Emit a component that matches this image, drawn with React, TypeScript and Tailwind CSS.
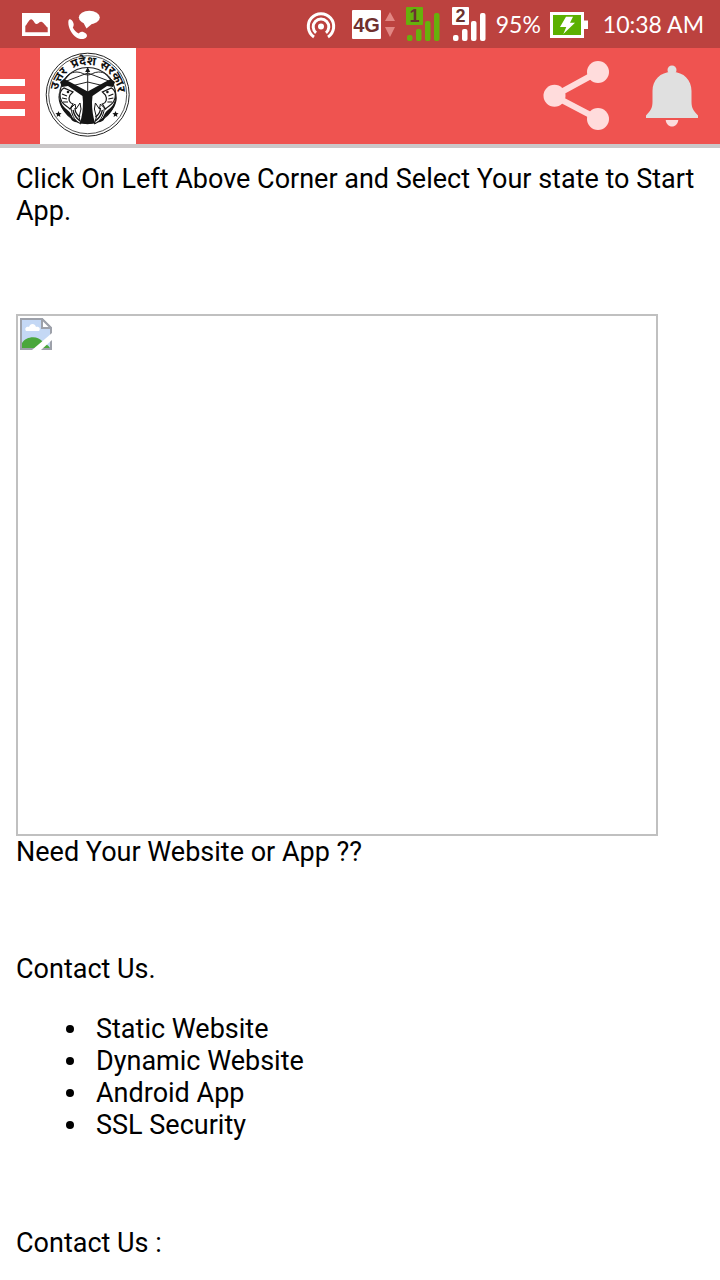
import type { ReactNode } from "react";

const services = ["Static Website", "Dynamic Website", "Android App", "SSL Security"];

function SignalBars({ sim, color }: { sim: string; color: string }) {
  return (
    <svg className="h-9 w-9" viewBox="0 0 36 36" role="img" aria-label={`SIM ${sim}`}>
      <rect x="0" y="1" width="17" height="18" rx="1" fill={color} />
      <text x="8.5" y="16" textAnchor="middle" fontSize="18" fontWeight="700" fill="#6b3330" fontFamily="Liberation Sans, sans-serif">
        {sim}
      </text>
      <g fill={color}>
        <rect x="1" y="29" width="5.5" height="6" rx="2" />
        <rect x="10" y="23" width="5.5" height="12" rx="2" />
        <rect x="19" y="15" width="5.5" height="20" rx="2" />
        <rect x="28" y="7" width="5.5" height="28" rx="2" />
      </g>
    </svg>
  );
}

function StatusBar() {
  return (
    <div className="flex h-12 items-center justify-between bg-[#bc423f] pr-4 pl-5 text-white">
      <div className="flex items-center gap-4">
        <svg className="h-8 w-8" viewBox="0 0 32 32" aria-hidden="true">
          <path
            fill="#fff"
            fillRule="evenodd"
            d="M2 5h28v23H2zM5.3 24.3h22.4v-4.8c-2-1-4-5.5-6.5-5.8-2 0-3 2.3-5 2.3-1.5 0-3-4.7-5-4.7-2.2 0-4 5-5.9 6.700z"
          />
        </svg>
        <svg className="h-8 w-8" viewBox="0 0 32 32" aria-hidden="true">
          <ellipse cx="21.3" cy="9.5" rx="10.5" ry="6.8" fill="#fff" />
          <path fill="#fff" d="M15 14l3.5 6.5L25 15z" />
          <path
            fill="#fff"
            d="M.5 12.5c.8-2 3-1.5 4.5 1.5 1.3 2.7.6 4.2-.2 5.5 1 2.5 3.5 5 6 6 1.2-1.3 2.5-2.3 5-1.2 3 1.2 3.8 3.2 2.7 4.7-1.7 2.5-6 2.8-10 .5C3.500 26.500-.6 18.500.5 12.500z"
          />
        </svg>
      </div>
      <div className="flex items-center">
        <svg className="mr-3.5 h-8 w-8" viewBox="0 0 32 32" fill="none" stroke="#fff" strokeWidth="3" aria-hidden="true">
          <path d="M8 29a12.7 12.7 0 1 1 14 0" />
          <path d="M10 24.8a7.8 7.8 0 1 1 10 0" />
          <circle cx="15" cy="18.5" r="3" fill="#fff" stroke="none" />
        </svg>
        <svg className="mr-2.5 h-9 w-11" viewBox="1 0 44 36" role="img" aria-label="4G">
          <rect x="1" y="4" width="29" height="29" rx="1" fill="#fff" />
          <text x="15.5" y="26" textAnchor="middle" fontSize="20" fontWeight="700" fill="#70302e" fontFamily="Liberation Sans, sans-serif">
            4G
          </text>
          <path fill="#e28784" d="M34 15l5-9 5 9zM34 21h10l-5 10z" />
        </svg>
        <div className="flex gap-2.5">
          <SignalBars sim="1" color="#67b10b" />
          <SignalBars sim="2" color="#ffffff" />
        </div>
        <span className="ml-2 font-['Lato',sans-serif] text-[23px]">95%</span>
        <svg className="ml-2 h-8 w-10" viewBox="0 0 40 32" aria-hidden="true">
          <path fill="#fff" d="M1 4h34v8.5h4V21h-4v9H1z" />
          <path fill="#5cb000" d="M4 7h28v20H4z" />
          <path fill="#fff" d="M17 8.700h7l-3 6h5L14.300 26l3-7H11z" />
        </svg>
        <time className="ml-3.5 font-['Lato',sans-serif] text-[23px]">10:38 AM</time>
      </div>
    </div>
  );
}

// one side of the seal: fish and waves, mirrored for the other side
function EmblemSide() {
  return (
    <g>
      <path d="M24 40c-5 3-5 9-2 14 2 3 5 4 8 7l3-5c-4-1-5-5-3-9l3-3z" fill="#fff" stroke="#151515" strokeWidth="1.2" />
      <path d="M19.500 43c-2 6 1 14 8 19 3 2 4 5 5 8l-5-3c-7-6-11-16-8-24z" fill="#151515" />
      <path d="M22 46l5 2m-5 2l5 1m-4 3l5 0" stroke="#151515" strokeWidth="1.2" />
      <circle cx="28" cy="44" r="1.3" fill="#151515" />
      <path d="M31 60l4-4 1 5 4-6 1 6-2 8 2 7c-5-2-9-7-10-16z" fill="#fff" stroke="#151515" strokeWidth="1" />
      <path d="M33 62c1 5 3 8 7 11m-5-13c0 4 2 7 5 9" fill="none" stroke="#151515" strokeWidth="1.3" />
      <path d="M31 67c2 4 5 6 10 8l-6-1c-3-1-5-3-4-7z" fill="#151515" />
    </g>
  );
}

function Emblem() {
  return (
    <svg className="h-24 w-24 bg-white" viewBox="0 0 96 96" role="img" aria-label="उत्तर प्रदेश सरकार">
      <defs>
        <path id="emblem-arc" d="M17.700 46.700a30 30 0 0 1 60 0" />
      </defs>
      <g fill="none" stroke="#222">
        <circle cx="47.7" cy="46.7" r="41.5" strokeWidth="1" />
        <circle cx="47.7" cy="46.7" r="39" strokeWidth=".8" />
        <circle cx="47.7" cy="47.5" r="28" strokeWidth="1.2" />
      </g>
      <text fontSize="12" fontWeight="700" fill="#111" textAnchor="middle" fontFamily="Noto Sans, sans-serif">
        <textPath href="#emblem-arc" startOffset="16%">उत्तर</textPath>
        <textPath href="#emblem-arc" startOffset="46%">प्रदेश</textPath>
        <textPath href="#emblem-arc" startOffset="80%">सरकार</textPath>
      </text>
      <EmblemSide />
      <g transform="translate(95.4 0) scale(-1 1)">
        <EmblemSide />
      </g>
      {/* bow and arrow */}
      <g fill="none" stroke="#222" strokeWidth="1">
        <path d="M23 34c3-7 8-10 14-10 5 0 7 3 10.700 3s6-3 10.700-3c6 0 11 3 14 10" />
        <path d="M47.700 21v24M24 34l23.700-9 23.700 9M31 38l16.700-4 16.700 4" />
      </g>
      <path d="M47.700 19l-2.500 5h5z" fill="#151515" />
      <path
        d="M20 34l4-3 6 3 17.700 9.500L65 34l6-3 4 3-2 5-6-1-14.500 10-.5 6c0 8 1 14 3 21-5 1.500-10 1.500-15 0 2-7 3-13 3-21l-.5-6L28 38l-6 1z"
        fill="#151515"
      />
      <g fill="#151515">
        <path d="M18.500 63l.9 2 2.200.2-1.700 1.500.5 2.200-1.900-1.200-1.900 1.200.5-2.200-1.700-1.500 2.200-.2z" />
        <path d="M75.500 63l.9 2 2.200.2-1.700 1.500.5 2.200-1.900-1.200-1.900 1.200.5-2.200-1.700-1.500 2.200-.2z" />
      </g>
    </svg>
  );
}

function BrokenImage() {
  return (
    <svg className="h-8 w-8" viewBox="0 0 32 32" aria-hidden="true">
      <path d="M1 1h21l9 9v21H1z" fill="#c4d8f5" />
      <path d="M6 13c-2-3 1-5 3-4 1-4 6-4 7 0 3-1 5 2 3 4z" fill="#fff" />
      <path d="M2 30v-5c4-7 16-8 21-1 3 2 5 3 7 6z" fill="#4aa73c" />
      <path d="M1 1h21l9 9v21H1z" fill="none" stroke="#9da1aa" strokeWidth="2" />
      <path d="M22 1v9h9z" fill="#fff" stroke="#9da1aa" strokeWidth="2" />
      <path d="M32 15v7L21 32h-9z" fill="#fff" />
    </svg>
  );
}

function IconButton({ label, children }: { label: string; children: ReactNode }) {
  return (
    <button type="button" aria-label={label} className="flex h-24 w-24 items-center justify-center">
      {children}
    </button>
  );
}

export default function App() {
  return (
    <div className="min-h-screen bg-white font-['Roboto',sans-serif] text-black">
      <StatusBar />
      <header className="flex items-start justify-between border-b-4 border-[#cbc8c9] bg-[#ef5350]">
        <div className="flex">
          <button type="button" aria-label="Menu" className="flex h-24 w-10 flex-col justify-center gap-2 pt-0.5">
            <span className="h-[7px] w-[25px] bg-white" />
            <span className="h-[7px] w-[25px] bg-white" />
            <span className="h-[7px] w-[25px] bg-white" />
          </button>
          <Emblem />
        </div>
        <div className="flex">
          <IconButton label="Share">
            <svg className="h-18 w-18" viewBox="0 0 72 72" fill="#ffdcdc" aria-hidden="true">
              <path d="M58 12L14 36l44 23" fill="none" stroke="#ffdcdc" strokeWidth="6" />
              <circle cx="58" cy="12" r="11" />
              <circle cx="14.5" cy="35.7" r="11" />
              <circle cx="58" cy="59" r="11" />
            </svg>
          </IconButton>
          <IconButton label="Notifications">
            <svg className="h-16 w-14" viewBox="0 0 56 64" fill="#e0e0e0" aria-hidden="true">
              <circle cx="28" cy="6" r="4.5" />
              <path d="M28 8c12 0 19.500 8 19.500 19v11c0 6 2 9 6.500 13.500V54H2v-2.500C6.500 47 8.500 44 8.500 38V27C8.500 16 16 8 28 8z" />
              <path d="M21.700 56h12.600c-.5 4-3 6.500-6.300 6.500S22.200 60 21.700 56z" fill="#fbdcdc" />
            </svg>
          </IconButton>
        </div>
      </header>
      <main className="px-4 pt-[15px] text-[27px] leading-8">
        <p>Click On Left Above Corner and Select Your state to Start App.</p>
        <div className="mt-[87px] h-[522px] w-[642px] max-w-full border-2 border-[#c0c0c0] p-0.5">
          <BrokenImage />
        </div>
        <p>Need Your Website or App ??</p>
        <p className="mt-[85px]">Contact Us.</p>
        <ul className="mt-7 pl-[50px]">
          {services.map((service) => (
            <li key={service} className="flex items-center before:mr-[22px] before:size-2 before:rounded-full before:bg-black">
              {service}
            </li>
          ))}
        </ul>
        <p className="mt-[86px]">Contact Us :</p>
      </main>
    </div>
  );
}
